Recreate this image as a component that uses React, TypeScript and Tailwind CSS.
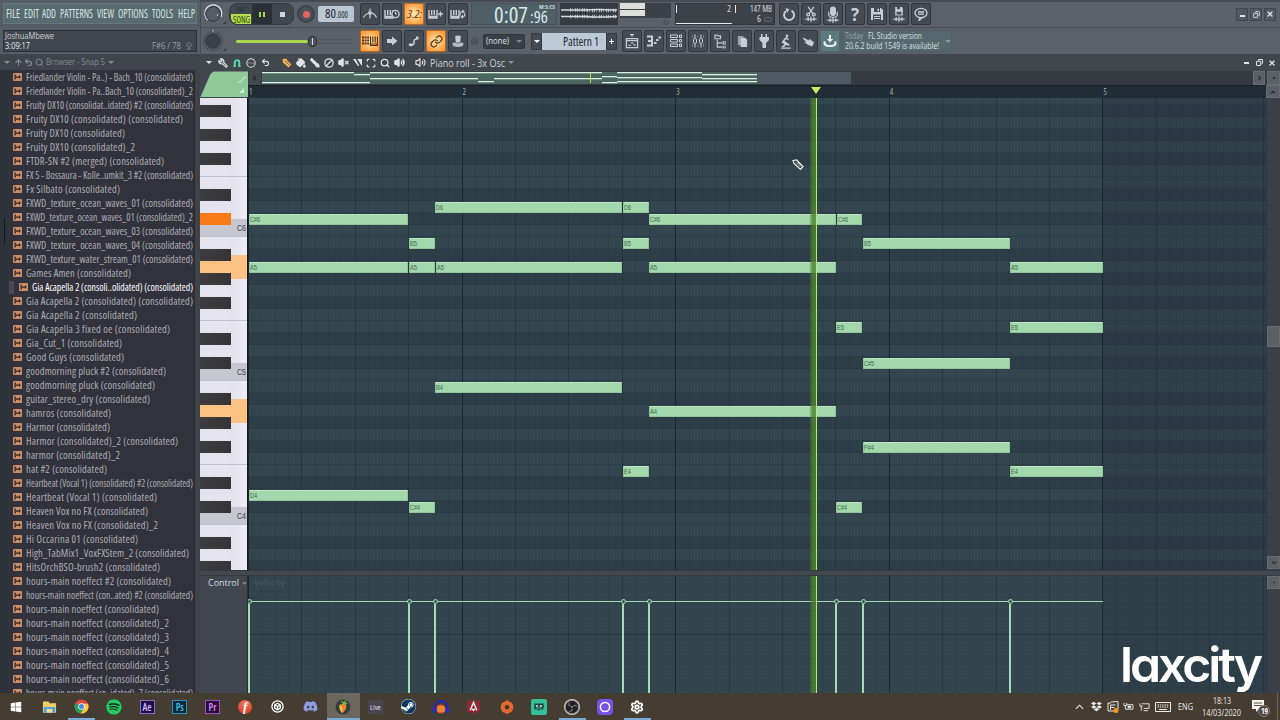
import { useLayoutEffect, useRef, type ReactNode } from "react";
import {
  ArrowUp, Undo2, Wrench, Magnet, CircleEllipsis, Brush, Ban, VolumeX, Volume2, Scan, Search,
  Link, Copy, X, PaintBucket, Settings, Lamp,
} from "lucide-react";
import { FaWindows, FaSpotify, FaSteam, FaDropbox, FaDiscord } from "react-icons/fa";
import { SiObsstudio } from "react-icons/si";

/** Single line of text set to an exact width, by horizontal scaling or by tracking. */
function Fit({ w, track = false, className = "", children }: { w: number; track?: boolean; className?: string; children: ReactNode }) {
  const ref = useRef<HTMLSpanElement>(null);
  useLayoutEffect(() => {
    const el = ref.current;
    if (!el) return;
    el.style.transform = "none";
    const natural = el.getBoundingClientRect().width;
    const length = (el.textContent ?? "").length;
    if (track && natural < w && length > 1) {
      el.style.letterSpacing = `${(w - natural) / (length - 1)}px`;
    } else {
      el.style.transform = `scaleX(${w / natural})`;
    }
  }, [w, track]);
  return (
    <span className="flex shrink-0" style={{ width: w }}>
      <span ref={ref} className={`shrink-0 origin-left whitespace-nowrap ${className}`}>{children}</span>
    </span>
  );
}

const files: [string, number][] = [
  ["Friedlander Violin - Pa..) - Bach_10 (consolidated)", 167],
  ["Friedlander Violin - Pa..Bach_10 (consolidated)_2", 167],
  ["Fruity DX10 (consolidat..idated) #2 (consolidated)", 167],
  ["Fruity DX10 (consolidated) (consolidated)", 157],
  ["Fruity DX10 (consolidated)", 99],
  ["Fruity DX10 (consolidated)_2", 109],
  ["FTDR-SN #2 (merged) (consolidated)", 138],
  ["FX 5 - Bossaura - Kolle..umkit_3 #2 (consolidated)", 167],
  ["Fx Silbato (consolidated)", 94],
  ["FXWD_texture_ocean_waves_01 (consolidated)", 167],
  ["FXWD_texture_ocean_waves_01 (consolidated)_2", 167],
  ["FXWD_texture_ocean_waves_03 (consolidated)", 167],
  ["FXWD_texture_ocean_waves_04 (consolidated)", 167],
  ["FXWD_texture_water_stream_01 (consolidated)", 167],
  ["Games Amen (consolidated)", 105],
  ["Gia Acapella 2 (consoli..olidated) (consolidated)", 161],
  ["Gia Acapella 2 (consolidated) (consolidated)", 167],
  ["Gia Acapella 2 (consolidated)", 111],
  ["Gia Acapella 3 fixed oe (consolidated)", 144],
  ["Gia_Cut_1 (consolidated)", 96],
  ["Good Guys (consolidated)", 98],
  ["goodmorning pluck #2 (consolidated)", 140],
  ["goodmorning pluck (consolidated)", 129],
  ["guitar_stereo_dry (consolidated)", 124],
  ["hamros (consolidated)", 85],
  ["Harmor (consolidated)", 84],
  ["Harmor (consolidated)_2 (consolidated)", 152],
  ["harmor (consolidated)_2", 94],
  ["hat #2 (consolidated)", 81],
  ["Heartbeat (Vocal 1) (consolidated) #2 (consolidated)", 167],
  ["Heartbeat (Vocal 1) (consolidated)", 131],
  ["Heaven Vox no FX (consolidated)", 122],
  ["Heaven Vox no FX (consolidated)_2", 132],
  ["Hi Occarina 01 (consolidated)", 112],
  ["High_TabMix1_VoxFXStem_2 (consolidated)", 163],
  ["HitsOrchBSO-brush2 (consolidated)", 134],
  ["hours-main noeffect #2 (consolidated)", 145],
  ["hours-main noeffect (con..ated) #2 (consolidated)", 167],
  ["hours-main noeffect (consolidated)", 133],
  ["hours-main noeffect (consolidated)_2", 143],
  ["hours-main noeffect (consolidated)_3", 143],
  ["hours-main noeffect (consolidated)_4", 143],
  ["hours-main noeffect (consolidated)_5", 143],
  ["hours-main noeffect (consolidated)_6", 143],
  ["hours-main noeffect (co..idated)_7 (consolidated)", 167],
];

const menu: [string, number, number][] = [
  ["FILE", 14, 3.5], ["EDIT", 15, 3], ["ADD", 14, 4.3], ["PATTERNS", 33, 4], ["VIEW", 17, 4.5], ["OPTIONS", 30, 4], ["TOOLS", 21, 4.5], ["HELP", 17, 0],
];

function Down({ className = "" }: { className?: string }) {
  return (
    <svg viewBox="0 0 8 4" className={`h-[3px] w-[6px] fill-current ${className}`}><path d="M0 0h8L4 4z" /></svg>
  );
}

function Browser() {
  return (
    <aside className="flex h-[693px] w-[200px] shrink-0 flex-col bg-[#32343c]">
      <div className="flex h-[54px] flex-col bg-[#565d64] pl-[3px] pt-[3px]">
        <div className="flex h-[21px] w-[194px] items-center border border-[#66787b] bg-[#586b6f] pl-[2px] text-[12px] font-medium leading-[14px] text-[#d5e3e2]">
          {menu.map(([t, w, g]) => (
            <span key={t} style={{ marginRight: g }}><Fit w={w}>{t}</Fit></span>
          ))}
        </div>
        <div className="mt-[6px] flex h-[22px] w-[194px] flex-col justify-between border border-[#2b3036] bg-[#40464d] px-[1px] text-[9px] leading-[10px] text-[#c9ced3] [font-stretch:normal]">
          <Fit w={49}>JoshuaMbewe</Fit>
          <div className="flex justify-between">
            <Fit w={25} className="font-medium text-[#e6eaee]">3:09:17</Fit>
            <div className="flex items-center gap-[4px] pr-[2px] text-[#9aa0a6]">
              <Fit w={29}>F#6 / 78</Fit>
              <Lamp size={8} strokeWidth={3} className="text-[#6d747b]" />
            </div>
          </div>
        </div>
      </div>
      <div className="flex h-[16px] items-center bg-[#40454c] pl-[4px] text-[#858b91]">
        <Down className="mr-[4px]" />
        <ArrowUp size={9} strokeWidth={3} className="mr-[1px]" />
        <Undo2 size={9} strokeWidth={3} className="mr-[2px]" />
        <Search size={9} strokeWidth={2.5} className="mr-[2px]" />
        <Fit w={59} className="text-[9px] leading-[12px] [font-stretch:normal]">Browser - Snap 5</Fit>
        <Down className="ml-[3px] h-[2px] w-[5px]" />
      </div>
      <div className="flex min-h-0 flex-1 overflow-hidden">
        <div className="flex w-[8px] shrink-0 flex-col bg-[#2c3239]">
          <div className="ml-[4px] mt-[148px] h-[26px] w-[1px] bg-[#14181d]" />
        </div>
        <ul className="w-[186px] shrink-0 overflow-hidden bg-[#32323c]">
          {files.map(([name, w], i) => (
            <li key={name} className={i === 15 ? "flex h-[14px] items-center" : "flex h-[14px] items-center pl-[5px]"}>
              {i === 15 && <span className="mr-[5px] ml-[1px] h-[13px] w-[5px] bg-[#4a4a52]" />}
              <svg viewBox="0 0 9 8" className="mr-[4px] h-[8px] w-[9px] shrink-0">
                <rect width="9" height="8" rx=".8" fill="#c98e69" />
                <path d="M1.500 1.500h1.300v5H1.500zM3 3.500h3V2l1.800 2L6 6V4.700H3z" fill="#33251f" />
              </svg>
              <Fit w={w} track className={i === 15 ? "text-[10.5px] font-medium leading-[14px] text-white" : "text-[10.5px] leading-[14px] text-[#acaeb3]"}>{name}</Fit>
            </li>
          ))}
        </ul>
        <div className="w-[6px] border-l border-[#272a31] bg-[#3f434a]" />
      </div>
    </aside>
  );
}

function Btn({ on = false, teal = false, children }: { on?: boolean; teal?: boolean; children?: ReactNode }) {
  const tone = on
    ? "border-[#c2651e] bg-[radial-gradient(circle,#ffe2a8_10%,#fd9f3f_80%)] text-[#553311]"
    : teal
      ? "border-[#50666b] bg-[#5c7a7d] text-[#e6f2f2]"
      : "border-[#31363c] bg-[#454b53] text-[#c9ced4]";
  return (
    <div className={`mr-[2px] flex h-[22px] w-[20px] shrink-0 items-center justify-center overflow-hidden rounded-[2px] border-[1.5px] ${tone}`}>{children}</div>
  );
}

function Keys({ plus, clock, loop }: { plus?: boolean; clock?: boolean; loop?: boolean }) {
  return (
    <svg viewBox="0 0 16 12" className="h-[12px] w-[16px] shrink-0" fill="none" stroke="currentColor" strokeWidth="1.4">
      <path d="M1 2v8h8V2M3.700 2v5M6.300 2v5" /><path d="M1 8.700h8" strokeWidth="2" />
      {plus && <path d="M10 6h5M12.500 3.500v5" />}
      {clock && <><circle cx="11.500" cy="6" r="3.600" fill="#454b53" /><path d="M11.500 4v2h1.600" strokeWidth="1" /></>}
      {loop && <path d="M10.300 7.600c-.9-3 .8-4.500 3-3.900M14.600 4.800c.9 3-.8 4.500-3 3.900M12.300 2l1.700 1.700-1.700 1.500M12.800 10.300l-1.500-1.600 1.500-1.500" strokeWidth="1.100" />}
    </svg>
  );
}

function Restart({ className = "" }: { className?: string }) {
  return (
    <svg viewBox="0 0 14 14" className={className} fill="none" stroke="currentColor" strokeWidth="1.900">
      <path d="M9.500 3.600A5 5 0 1 1 4 4" /><path d="M3.500 1l3.800 1.300L5 6z" fill="currentColor" stroke="none" />
    </svg>
  );
}

function Knob({ lit = false }: { lit?: boolean }) {
  return (
    <svg viewBox="0 0 28 26" className="h-[26px] w-[28px] shrink-0">
      {lit
        ? <path d="M7 19A8.500 8.500 0 1 1 20 16" fill="none" stroke="#e7ebef" strokeWidth="1.200" />
        : <circle cx="12" cy="13" r="9.500" fill="none" stroke="#32373d" strokeWidth="1.200" strokeDasharray="1 1.500" />}
      <circle cx="12" cy="13" r="7.300" fill={lit ? "#555c63" : "#3b4046"} stroke="#333940" />
      <circle cx={lit ? 16.5 : 12} cy={lit ? 14 : 3} r=".8" fill="#cfd4d9" />
      <path d="M22 23h3v-3z" fill="#363c42" />
    </svg>
  );
}

const windowBtn = "flex h-[13px] w-[12px] items-center justify-center border border-[#41474d] bg-[#515860] text-[#dfe3e7]";

function TopBar() {
  return (
    <header className="h-[54px] border-t-2 border-[#464c52] bg-[#5b6168]">
      <div className="flex h-[26px] items-center border-b border-l border-[#484e55] pb-[1px]">
        <Knob lit />
        <div className="flex h-[22px] w-[65px] overflow-hidden rounded-[8px] border border-[#343a40] bg-[#41474e]">
          <div className="flex w-[22px] flex-col items-center pt-[1px] text-[6.5px] leading-[9px]">
            <span className="text-[#252a30]">PAT</span>
            <span className="flex h-[10px] w-[20px] items-center justify-center rounded-bl-[6px] bg-[#b1df4e] text-[#2f4212]"><Fit w={17} className="text-[8px] font-medium leading-[9px]">SONG</Fit></span>
          </div>
          <div className="flex w-[20px] items-center justify-center gap-[2px] bg-[#2b3036]">
            <span className="h-[5px] w-[2px] bg-[#a9d850]" /><span className="h-[5px] w-[2px] bg-[#a9d850]" />
          </div>
          <div className="flex w-[21px] items-center justify-center"><span className="h-[5px] w-[5px] bg-[#d0d5da]" /></div>
        </div>
        <div className="ml-[3px] flex h-[18px] w-[18px] items-center justify-center rounded-full border-2 border-[#3d434a] bg-[#4b5158]"><span className="h-[7px] w-[7px] rounded-full bg-[#eb615d]" /></div>
        <div className="ml-[3px] flex h-[16px] w-[36px] items-baseline rounded-[2px] bg-[#bac6d2] pl-[7px] text-[#23292f]">
          <Fit w={11} className="text-[12px] leading-[16px]">80</Fit><Fit w={12} className="text-[9px] leading-[12px]">.000</Fit>
          <span className="ml-[2px] text-[6px] leading-[8px] text-[#7a8590]">:</span>
        </div>
        <div className="ml-[6px] flex">
          <Btn><svg viewBox="0 0 16 12" className="h-[12px] w-[16px] shrink-0" fill="none" stroke="currentColor"><path d="M1.500 9.500C3 6.500 5 5.300 8 5s5 1.500 6.500 4.500M8 .5v10" strokeWidth="1.200" /><path d="M6 3.500h4L9 7H7z" fill="currentColor" stroke="none" /></svg></Btn>
          <Btn><Keys clock /></Btn>
          <Btn on><Fit w={15} className="text-[11px] italic leading-[12px]">3.2:</Fit></Btn>
          <Btn><Keys plus /></Btn>
          <Btn><Keys loop /></Btn>
        </div>
        <div className="relative ml-[1px] flex h-[22px] w-[86px] items-baseline rounded-[1px] border border-[#44545a] bg-[#4e5f65] pl-[22px] text-[#d6e8e7]">
          <Fit w={34} className="text-[22px] leading-[20px]">0:07</Fit>
          <span className="ml-[2px]"><Fit w={18} className="text-[16.5px] leading-[12px]">:96</Fit></span>
          <span className="absolute right-[1px] top-0"><Fit w={16} className="text-[6px] font-semibold leading-[6px]">M:S:CS</Fit></span>
        </div>
        <svg viewBox="0 0 58 22" className="ml-[3px] h-[22px] w-[58px] bg-[#363b42]" fill="none" stroke="#d5dade">
          <path d="M1 7h25q8-1 31 0" strokeWidth="1.300" />
          <path d="M1 13.500h25q8 1 31 0" strokeWidth="1.300" />
          <path d="M10 7h17M27 7.500h30M10 13.500h17M27 13.500h30" strokeWidth="3.500" strokeDasharray="1 1.300 .6 2 1.300 .8" opacity=".75" />
        </svg>
        <div className="ml-[2px] flex h-[22px] w-[51px] flex-col text-[#3b4147]">
          <div className="flex h-[15px] flex-col gap-[1px] bg-[#3c4148]"><span className="h-[6px] w-[25px] bg-[#dedfdc]" /><span className="h-[6px] w-[25px] bg-[#dedfdc]" /></div>
          <Restart className="ml-auto mr-[2px] mt-[1px] h-[6px] w-[6px]" />
        </div>
        <div className="ml-[4px] flex h-[22px] w-[100px] justify-end gap-[4px] border border-[#30363c] bg-[#3d4249] pr-[1px] text-[9px] font-medium leading-[10px] text-[#d3d8dc]">
          <div className="mr-auto flex w-[55px] flex-col"><div className="flex justify-between"><span className="mt-[1px] h-[8px] w-[1px] bg-[#dfe3e6]" /><Fit w={4}>2</Fit></div><span className="mt-auto h-px w-[56px] bg-[#e8ecef]" /></div>
          <span className="mt-[1px] h-[8px] w-[1px] bg-[#dfe3e6]" />
          <div className="flex w-[36px] flex-col items-end"><div className="pr-[1px]"><Fit w={22}>147 MB</Fit></div><div className="flex items-center gap-[3px] pr-[1px]"><Fit w={4}>6</Fit><span className="h-[5px] w-[8px] rounded-full border border-[#646b72]" /></div></div>
        </div>
        <div className="ml-[4px] flex">
          <Btn><Restart className="h-[14px] w-[14px]" /></Btn>
          <Btn><svg viewBox="0 0 14 18" className="h-[17px] w-[14px]" fill="none" stroke="currentColor" strokeWidth="1.300"><path d="M4 1l5 7M10 1L5 8M1 14h12M4 12v4M7 11v6M10 12v4" /><circle cx="4" cy="9" r="1.500" /><circle cx="10" cy="9" r="1.500" /></svg></Btn>
          <Btn><svg viewBox="0 0 14 18" className="h-[17px] w-[14px]" fill="none" stroke="currentColor" strokeWidth="1.200"><rect x="4.500" y="1" width="5" height="9" rx="2.500" fill="currentColor" /><path d="M2.500 6v4q1 2 4.500 2t4.500-2V6M1 15h12M4 13v4M7 12v6M10 13v4" /></svg></Btn>
          <Btn><span className="text-[17px] font-bold leading-none [font-stretch:normal]">?</span></Btn>
          <Btn><svg viewBox="0 0 12 12" className="h-[12px] w-[12px]"><path d="M0 0h10l2 2v10H0z" fill="currentColor" /><path d="M3 0h6v4H3zM2 6.500h8V12H2z" fill="#454b53" /><path d="M6.500.8h1.500v2.500H6.500zM3 8h6v1H3zM3 10h6v1H3z" fill="currentColor" /></svg></Btn>
          <Btn><svg viewBox="0 0 14 18" className="h-[17px] w-[14px]"><path d="M3 1h7l1 1v8H3z" fill="currentColor" /><path d="M5 1h3v2.500H5zM4.500 6h5v3h-5z" fill="#454b53" /><path d="M1 14h12M4 12v4M7 11v6M10 12v4" stroke="currentColor" strokeWidth="1.300" /></svg></Btn>
          <Btn><svg viewBox="0 0 14 14" className="h-[14px] w-[14px]" fill="none" stroke="currentColor" strokeWidth="1.300"><ellipse cx="7" cy="6" rx="6" ry="4.700" /><path d="M6 10l-1 3.500L9 10M4 5h6M4 7.200h6" /></svg></Btn>
        </div>
        <div className="ml-auto mr-[4px] flex gap-[2px]">
          <span className={windowBtn}><span className="mt-[4px] h-[2px] w-[5px] bg-current" /></span>
          <span className={windowBtn}><Copy size={7} strokeWidth={3} className="-scale-x-100" /></span>
          <span className={windowBtn}><X size={8} strokeWidth={4} /></span>
        </div>
      </div>
      <div className="flex h-[26px] items-center border-l border-[#484e55]">
        <Knob />
        <div className="ml-[7px] flex h-[20px] w-[116px] items-center">
          <span className="h-[3px] w-[72px] rounded bg-[#a9d64b]" />
          <span className="flex h-[11px] w-[9px] justify-center rounded-full border border-[#25292d] bg-[#4e555c] pt-[1px]"><span className="h-[7px] w-[1px] bg-[#d7dbdf]" /></span>
          <span className="h-[5px] w-[35px] border-y border-[#4f565d]" />
        </div>
        <div className="ml-[8px] flex">
          <Btn on><svg viewBox="0 0 16 12" className="h-[12px] w-[16px] shrink-0" fill="none" stroke="currentColor" strokeWidth="1.200"><path d="M0 2.500h7M0 5.500h7M0 8.500h7" strokeDasharray="2 .6" strokeWidth="2" /><path d="M8.500 1.500v9h7v-9M10.800 1.500v6M13.200 1.500v6M8.500 9h7" /></svg></Btn>
          <Btn><svg viewBox="0 0 12 12" className="h-[12px] w-[12px] fill-current"><path d="M1 4h5V1.500L11.500 6 6 10.500V8H1z" /></svg></Btn>
          <Btn><svg viewBox="0 0 12 12" className="h-[12px] w-[12px]"><path d="M3 10q3.500 0 3-3T9 4" fill="none" stroke="currentColor" strokeWidth="1.500" /><ellipse cx="2.800" cy="9.700" rx="2.200" ry="1.500" fill="currentColor" /><path d="M8 1.500h2.500V4.500H8z" fill="currentColor" /></svg></Btn>
          <Btn on><Link size={13} strokeWidth={2.200} /></Btn>
          <Btn><svg viewBox="0 0 14 14" className="h-[13px] w-[14px] fill-current"><path d="M4 1q3-1 6 0l-.6 7H4.600z" /><path d="M1 9.500q0-1.500 2.500-1.500 3.500 2 7 0Q13 8 13 9.500 13 13 7 13T1 9.500z" opacity=".85" /></svg></Btn>
        </div>
        <Magnet size={9} className="-rotate-45 text-[#41474d]" />
        <div className="ml-[4px] flex h-[15px] w-[42px] items-center justify-between rounded-[2px] border border-[#31353a] bg-[#3a3f46] px-[2px] text-[#dde1e5]"><Fit w={23} className="text-[9px] leading-[12px] [font-stretch:normal]">(none)</Fit><Down className="w-[5px] text-[#7d848b]" /></div>
        <div className="ml-[6px] flex h-[17px] items-center">
          <span className="flex h-[17px] w-[11px] items-center justify-center border border-[#353b41] bg-[#444a51] text-white"><Down className="w-[5px]" /></span>
          <span className="flex h-[17px] w-[64px] items-center bg-[#bcc9d6] pl-[21px] text-[#23292f]"><Fit w={36} className="text-[12px] leading-[15px]">Pattern 1</Fit><span className="ml-[2px] text-[7px] leading-[8px] text-[#7a8590]">:</span></span>
          <span className="flex h-[17px] w-[11px] items-center justify-center border border-[#353b41] bg-[#444a51] text-white"><svg viewBox="0 0 6 6" className="h-[5px] w-[5px]"><path d="M0 3h6M3 0v6" stroke="currentColor" strokeWidth="1.200" /></svg></span>
        </div>
        <div className="ml-[5px] flex">
          <Btn><svg viewBox="0 0 14 16" className="h-[15px] w-[14px]" fill="none" stroke="currentColor" strokeWidth="1.300"><path d="M4.500 0h5L7 3z" fill="currentColor" stroke="none" /><path d="M1 5h12v9.500H1zM1 7h12M3 12h3M6 9.800h2.500M8.500 11.500H11" /></svg></Btn>
          <Btn><svg viewBox="0 0 14 12" className="h-[12px] w-[14px]" fill="none" stroke="currentColor" strokeWidth="2"><path d="M0 1.500h5M1 6h4M0 10.500h5M5 .5v11M7 8h2.500M9 5h2.500M11.500 2.500H14" /></svg></Btn>
          <Btn><svg viewBox="0 0 12 14" className="h-[14px] w-[12px]" fill="none" stroke="currentColor" strokeWidth="1"><path d="M.5 1h7v2.500h-7zM.5 5.500h7V8h-7zM.5 10h7v2.500h-7zM9.500 1h2v2.500h-2zM9.500 5.500h2V8h-2zM9.500 10h2v2.500h-2z" /></svg></Btn>
          <Btn><svg viewBox="0 0 12 14" className="h-[14px] w-[12px]" fill="none" stroke="currentColor" strokeWidth="1"><path d="M3 .5v4M3 9.500v4M9 .5v4M9 9.500v4" /><path d="M.5 1v3M.5 10v3M11.500 1v3M11.500 10v3M6 1v3M6 10v3" opacity=".35" /><rect x="1.500" y="4.500" width="3" height="5" rx="1.300" /><rect x="7.500" y="4.500" width="3" height="5" rx="1.300" /></svg></Btn>
          <Btn><svg viewBox="0 0 14 16" className="h-[15px] w-[13px]" fill="none" stroke="currentColor" strokeWidth="1.200"><path d="M1 1h2l1 1h3v3H1zM3.500 6v8H9M3.500 9.500H9M10 7.500v4M12 7.500v4M10 12.500v3M12 12.500v3" /></svg></Btn>
          <Btn><svg viewBox="0 0 12 14" className="h-[13px] w-[11px]"><path d="M1 1h6v10H1z" fill="#9ca2a9" /><path d="M4 3h5l2 2v8H4z" fill="currentColor" /></svg></Btn>
          <Btn><svg viewBox="0 0 12 14" className="h-[14px] w-[12px] fill-current"><path d="M3 0h1.500v3h3V0H9v3h2v3L8 9v5H4.500V9L1.500 6V3H3z" /></svg></Btn>
          <Btn><svg viewBox="0 0 14 16" className="h-[15px] w-[14px]" fill="none" stroke="currentColor" strokeWidth="1.800"><circle cx="8" cy="2" r="1.400" fill="currentColor" stroke="none" /><path d="M7 4L3.500 8.500 7 11l-4 3M4.500 8l6 4M9.500 6L7 4" /><path d="M2 15h10" strokeWidth="1.200" /></svg></Btn>
          <Btn><svg viewBox="0 0 14 12" className="h-[11px] w-[13px] fill-current"><path d="M1 1.500L7.500 5 8 3l5 4-2 4.500-5-2-1-1.300L2 7.500l2.500-1L1 3z" /></svg></Btn>
          <Btn teal><svg viewBox="0 0 14 14" className="h-[14px] w-[14px]"><path d="M6 1h2v4h2.200L7 8.500 3.800 5H6z" fill="currentColor" /><path d="M2 7.500Q0 12 7 12t5-4.500" fill="none" stroke="currentColor" strokeWidth="2.200" /></svg></Btn>
        </div>
        <div className="flex h-[22px] w-[110px] items-center border border-[#4d6165] bg-[#56686d] pl-[2px] text-[9px] leading-[10px] [font-stretch:normal]">
          <div>
            <div className="flex gap-[5px]"><Fit w={18} className="text-[#95a5a9]">Today</Fit><Fit w={54} className="text-[#d4e3e3]">FL Studio version</Fit></div>
            <Fit w={94} className="text-[#d4e3e3]">20.6.2 build 1549 is available!</Fit>
          </div>
          <Down className="ml-[6px] w-[5px] text-[#87979b]" />
        </div>
      </div>
    </header>
  );
}

function Slot({ w = 14, className = "", children }: { w?: number; className?: string; children: ReactNode }) {
  return <span className={`flex shrink-0 items-center justify-center ${className}`} style={{ width: w }}>{children}</span>;
}

function RollTitle() {
  return (
    <div className="flex h-[17px] items-center bg-[#42474e] pl-[2px] text-[#dfe3e6]">
      <Slot><Down /></Slot>
      <Slot><Wrench size={10} strokeWidth={3} className="-scale-x-100" /></Slot>
      <Slot className="text-[#57dba8]"><svg viewBox="0 0 10 10" className="h-[9px] w-[10px]" fill="none" stroke="currentColor" strokeWidth="2.200"><path d="M2.500 9.500V5a2.500 2.500 0 0 1 5 0v4.500" /><path d="M.8 9h3M6.200 9h3" strokeWidth="1.500" /></svg></Slot>
      <Slot><CircleEllipsis size={10} strokeWidth={2.500} /></Slot>
      <Slot w={28} className="pr-[13px]"><Undo2 size={9} strokeWidth={3} /></Slot>
      <Slot className="-ml-[6px] text-[#f5b04f]"><svg viewBox="0 0 10 10" className="h-[10px] w-[10px]"><path d="M.5 1L4 .5 9.500 6l-3 3.500L1 4.500z" fill="currentColor" /><path d="M3 3l4 4M5 2l3.500 4" stroke="#42474e" strokeWidth=".7" /></svg></Slot>
      <Slot><PaintBucket size={10} strokeWidth={3} className="fill-current" /></Slot>
      <Slot><Brush size={10} strokeWidth={3} className="-scale-x-100 fill-current" /></Slot>
      <Slot><Ban size={10} strokeWidth={3} className="-scale-x-100" /></Slot>
      <Slot><VolumeX size={11} strokeWidth={3} className="fill-current" /></Slot>
      <Slot><svg viewBox="0 0 10 10" className="h-[9px] w-[9px] fill-current"><path d="M0 1h3l4 8H5.500zM5 1h5v8L8 6z" /></svg></Slot>
      <Slot><Scan size={10} strokeWidth={3} /></Slot>
      <Slot><Search size={10} strokeWidth={3} /></Slot>
      <Slot><Volume2 size={11} strokeWidth={3} className="fill-current" /></Slot>
      <Slot w={28} className="-mr-[4px]"><Volume2 size={11} strokeWidth={2.500} /></Slot>
      <Fit w={75} className="text-[10px] leading-[14px] text-[#cdd2d6] [font-stretch:normal]">Piano roll - 3x Osc</Fit>
      <Down className="ml-[3px] h-[2px] w-[5px] text-[#8a9096]" />
      <span className="ml-auto h-[2px] w-[5px] bg-current" />
      <Copy size={7} strokeWidth={3.500} className="ml-[7px] -scale-x-100" />
      <X size={8} strokeWidth={4} className="ml-[5px] mr-[4px]" />
    </div>
  );
}

// x start, width, y — all relative to the overview strip
const overview: [number, number, number][] = [
  [0, 92, 0], [0, 92, 10], [92, 16, 2], [92, 16, 10], [108, 108, 0], [108, 108, 6], [216, 16, 0], [216, 16, 9],
  [232, 108, 0], [232, 108, 6], [340, 15, 4], [340, 15, 10], [355, 85, 0], [355, 85, 5], [355, 85, 9], [440, 55, 2], [440, 55, 6], [440, 55, 9],
];

const white = [18, 24, 24, 18, 18, 24, 18];
const blackRows = new Set([1, 3, 5, 8, 10]);

function Piano() {
  return (
    <div className="flex h-[472px] w-[48px] shrink-0 overflow-hidden border-r border-[#15191d] bg-[#e4e3ee]">
      <div className="-mt-[5px] w-[31px]">
        {Array.from({ length: 40 }, (_, i) => {
          const n = i % 12;
          let c = "bg-[#e4e3ee]";
          if (blackRows.has(n)) c = "bg-[linear-gradient(90deg,#3d3d40,#343437)]";
          if (i === 10) c = "bg-[#fb7a18]";
          if (i === 14 || i === 26) c = "bg-[#fbc284]";
          if (n === 11) c = "bg-[#c6c7cf]";
          const edge = n === 11 || n === 6 ? "border-b border-[#c2c2cc]" : "";
          return <div key={i} className={`h-[12px] ${c} ${edge}`} />;
        })}
      </div>
      <div className="-mt-[5px] w-[16px] shrink-0">
        {Array.from({ length: 24 }, (_, i) => {
          const n = i % 7;
          const c = i === 8 || i === 15 ? "bg-[#fbc284]" : n === 6 ? "bg-[#c6c7cf]" : "bg-[linear-gradient(90deg,#e2e1ec,#eeedf6)]";
          const edge = n === 6 || n === 3 ? "border-b border-[#c2c2cc]" : "";
          return (
            <div key={i} className={`flex items-center justify-end pr-px text-[9px] leading-[10px] text-[#3c3d44] ${c} ${edge}`} style={{ height: white[n] }}>
              {n === 6 && <Fit w={9} className="font-['Liberation_Sans']">{`C${6 - Math.floor(i / 7)}`}</Fit>}
            </div>
          );
        })}
      </div>
    </div>
  );
}

const STEP = 13.35;

function Columns() {
  return (
    <>
      {Array.from({ length: 77 }, (_, k) => {
        const c = k % 16 === 0 ? "bg-[#17242c]/90" : k % 4 === 0 ? "bg-[#1f2d36]/60" : "bg-[#1f2d36]/20";
        return <i key={k} className={`absolute inset-y-0 w-px ${c}`} style={{ left: Math.round(k * STEP) }} />;
      })}
      <i className="absolute inset-y-0 left-[855px] right-0 bg-[#1c2a38]/20" />
    </>
  );
}

const Playhead = () => (
  <i className="absolute inset-y-0 left-[561px] w-[8px] border-r border-[#b5ec77] bg-[linear-gradient(90deg,transparent,#4d8030cc_50%,#4d8a2acc)]" />
);

// label, start, end, row index counted from the top row
const notes: [string, number, number, number][] = [
  ["C#6", 1, 160, 10], ["A5", 1, 160, 14], ["D4", 1, 160, 33],
  ["B5", 161, 187, 12], ["A5", 161, 187, 14], ["C#4", 161, 187, 34],
  ["D6", 187, 374, 9], ["A5", 188, 374, 14], ["B4", 187, 374, 24],
  ["D6", 375, 401, 9], ["B5", 375, 401, 12], ["E4", 375, 401, 31],
  ["C#6", 401, 588, 10], ["A5", 401, 588, 14], ["A4", 401, 588, 26],
  ["C#6", 589, 614, 10], ["E5", 588, 614, 19], ["C#4", 588, 614, 34],
  ["B5", 615, 762, 12], ["C#5", 615, 762, 22], ["F#4", 615, 762, 29],
  ["A5", 762, 855, 14], ["E5", 762, 855, 19], ["E4", 762, 855, 31],
];

function Grid() {
  return (
    <div className="relative h-[472px] min-w-0 flex-1 overflow-hidden bg-[#33454f]">
      <div className="-mt-[5px]">
        {Array.from({ length: 40 }, (_, i) => (
          <div key={i} className={blackRows.has(i % 12) ? "h-[12px] border-b border-[#2a3943] bg-[#2e3e49]" : "h-[12px] border-b border-[#2e3e48] bg-[#33454f]"} />
        ))}
      </div>
      <Columns />
      {notes.map(([t, a, b, r], i) => (
        <div key={i} className="absolute flex h-[11px] items-center rounded-[1px] border border-[#8fc79b] border-t-[#b9e6bf] bg-[#a3d7ac]" style={{ left: a, width: b - a, top: r * 12 - 4 }}>
          <Fit w={t.length > 2 ? 10 : 7} className="font-['Liberation_Sans'] text-[7.5px] leading-[9px] text-[#42684c]">{t}</Fit>
        </div>
      ))}
      <Playhead />
      <svg viewBox="0 0 12 12" className="absolute left-[544px] top-[61px] h-[12px] w-[12px]">
        <path d="M1 1.500l3.500-.5L11 7.500 8.500 10.500 2 4.500z" fill="#2c3a43" stroke="#f2f4f5" strokeWidth="1.200" />
        <path d="M4 3.500l4.500 4.500M5.500 3l3.800 3.800" stroke="#f2f4f5" strokeWidth=".7" />
      </svg>
    </div>
  );
}

const stems = [1, 161, 187, 375, 401, 588, 615, 762];

function Velocity() {
  return (
    <div className="relative h-[117px] min-w-0 flex-1 overflow-hidden bg-[#33454f] bg-[repeating-linear-gradient(0deg,transparent_0_5px,#2b3b4566_5px_6px)]">
      <Columns />
      <i className="absolute inset-x-0 top-[58px] h-px bg-[#1e2c35]/60" />
      <div className="absolute left-[6px] top-[1px]"><Fit w={31} className="text-[9px] leading-[12px] text-[#465660]">Velocity</Fit></div>
      <i className="absolute left-0 top-[25px] h-px w-[855px] bg-[#a6d8b2]" />
      {stems.map((x) => (
        <span key={x} className="absolute bottom-0 top-[23px] flex w-[4px] flex-col items-center" style={{ left: x - 2 }}>
          <i className="h-[5px] w-[5px] shrink-0 rounded-full border border-[#a6d8b2] bg-[#3b5a52]" />
          <i className="w-[2px] flex-1 bg-[#a6dab2]" />
        </span>
      ))}
      <Playhead />
    </div>
  );
}

const scrollBtn = "flex shrink-0 items-center justify-center border border-[#666c72] bg-[#5a6066] text-[#2c3136]";

function Chevron({ d }: { d: string }) {
  return <svg viewBox="0 0 8 8" className="h-[6px] w-[6px]" fill="none" stroke="currentColor" strokeWidth="1.500"><path d={d} /></svg>;
}

function PianoRoll() {
  return (
    <main className="flex h-[639px] flex-col bg-[#42474e]">
      <RollTitle />
      <div className="flex h-[27px]">
        <svg viewBox="0 0 48 27" className="h-[27px] w-[48px] shrink-0">
          <path d="M0 27L10 4q2-3.500 5-3.500h33V26H0z" fill="#8fc99a" />
          <path d="M38 11h3l2-4 3-1" fill="none" stroke="#d0ecd3" strokeWidth="1" />
          <path d="M39 22h5v-5z" fill="#d0ecd3" />
        </svg>
        <div className="flex min-w-0 flex-1 flex-col">
          <div className="flex h-[14px] bg-[#363b42]">
            <span className="ml-[1px] mr-[1px] flex w-[12px] items-center justify-center bg-[#42484f] text-[#23282d]"><Chevron d="M5 1L2 4l3 3" /></span>
            <div className="relative mt-px h-[12px] w-[589px] bg-[#4d5a62]">
              <i className="absolute left-0 h-full w-[495px] bg-[#4b6561]" />
              {overview.map(([x, w, y], i) => <i key={i} className="absolute h-px bg-[#d9efdf] shadow-[0_1px_#9fbcae80]" style={{ left: x, width: w, top: y }} />)}
              <i className="absolute left-[328px] top-[1px] h-[10px] w-px bg-[#b5e83e]" />
            </div>
            <span className={`${scrollBtn} ml-auto w-[12px]`}><Chevron d="M3 1l3 3-3 3" /></span>
            <span className={`${scrollBtn} ml-[2px] w-[13px]`}><i className="h-[2px] w-[2px] bg-current" /></span>
          </div>
          <div className="flex h-[13px]">
            <div className="relative flex min-w-0 flex-1 overflow-hidden border-t border-[#172129] bg-[#202d35] text-[8px] leading-[12px] text-[#a3adb4]">
              {[1, 2, 3, 4, 5].map((n) => <span key={n} className="w-[213.6px] shrink-0 pl-[1px]">{n}</span>)}
              <svg viewBox="0 0 10 7" className="absolute left-[563px] top-[1px] h-[7px] w-[10px]"><path d="M0 0h10L5 7z" fill="#c9f063" /></svg>
            </div>
            <span className={`${scrollBtn} w-[14px]`}><Chevron d="M1 6l3-3 3 3" /></span>
          </div>
        </div>
      </div>
      <div className="flex h-[472px]">
        <Piano />
        <Grid />
        <div className="flex w-[14px] flex-col border-l border-[#30363c] bg-[#3a4047]">
          <span className={`${scrollBtn} mt-[228px] h-[21px]`} />
          <span className={`${scrollBtn} mb-[1px] mt-auto h-[13px]`}><Chevron d="M1 2l3 3 3-3" /></span>
        </div>
      </div>
      <div className="h-[6px] border-y border-[#333a41] bg-[#43484e]" />
      <div className="flex h-[117px]">
        <div className="flex h-full w-[48px] shrink-0 items-start border-r border-[#262e35] bg-[#41474e] pl-[8px] text-[#d9dde0]">
          <Fit w={31} className="text-[9.500px] leading-[13px] [font-stretch:normal]">Control</Fit><Down className="ml-[3px] mt-[6px] w-[4px] text-[#8a9096]" />
        </div>
        <Velocity />
        <div className="w-[14px] border-l border-[#30363c] bg-[#3a4047]"><span className={`${scrollBtn} h-[13px]`}><i className="h-px w-[2px] bg-current" /></span></div>
      </div>
    </main>
  );
}

function Adobe({ t, tone }: { t: string; tone: string }) {
  return <span className={`flex h-[14px] w-[15px] items-center justify-center border text-[10px] font-semibold leading-none ${tone}`}>{t}</span>;
}

function Taskbar() {
  const apps: ReactNode[] = [
    <FaWindows size={12} color="#fff" />,
    <svg viewBox="0 0 16 14" className="h-[14px] w-[15px]"><path d="M1 1h6l1 2h7v10H1z" fill="#f6cf63" /><path d="M2 7h12v6H2z" fill="#4aa0dc" /><path d="M5 9h6v4H5z" fill="#f6dc8c" /></svg>,
    <svg viewBox="0 0 16 16" className="h-[15px] w-[15px]"><circle cx="8" cy="8" r="7.500" fill="#dd4b3e" /><path d="M8 8L1.500 4.300A7.500 7.500 0 0 0 7 15.400L11.200 9.800z" fill="#23a05a" /><path d="M8 8l3.200 1.800L7 15.400A7.500 7.500 0 0 0 14.900 5H8z" fill="#fcca3f" /><circle cx="8" cy="8" r="3.500" fill="#fff" /><circle cx="8" cy="8" r="2.700" fill="#4687e8" /></svg>,
    <span className="rounded-full bg-[#1d2b20]"><FaSpotify size={16} color="#28c865" /></span>,
    <Adobe t="Ae" tone="bg-[#1f0e42] border-[#8670c8] text-[#cfb4ff]" />,
    <Adobe t="Ps" tone="bg-[#0c2838] border-[#2295bd] text-[#42c6ef]" />,
    <Adobe t="Pr" tone="bg-[#2b0e38] border-[#a04fc0] text-[#dd8dff]" />,
    <span className="flex h-[14px] w-[14px] items-center justify-center rounded-full bg-[radial-gradient(circle_at_50%_25%,#f47b62,#d12f1e)] font-['Liberation_Serif'] text-[13px] font-bold italic leading-none text-white">f</span>,
    <svg viewBox="0 0 14 14" className="h-[13px] w-[13px]" fill="none" stroke="#fff" strokeWidth="1.400"><circle cx="7" cy="7" r="6" /><path d="M7 3.500l3 1.700v3.600l-3 1.700-3-1.700V5.200zM4 5.200L7 7l3-1.800M7 7v3.500" /></svg>,
    <FaDiscord size={15} color="#8b9de0" />,
    <svg viewBox="0 0 16 16" className="h-[16px] w-[16px]"><circle cx="8" cy="8" r="7.500" fill="#343c3e" /><path d="M4.500 6q1-1.500 4-1 2.500 0 3 1.500-.5 5-4 7.500Q4.500 11 4.500 6z" fill="#f4802a" /><path d="M5.500 7l2 4M7 13.500Q4.500 10 5 6.500" stroke="#f8d24b" strokeWidth="1.200" fill="none" /><path d="M8 6L6 1.500 8.500 3 11 1l-.5 3L13 4 9.500 6.500z" fill="#76b83f" /></svg>,
    <span className="flex h-[14px] w-[15px] items-center justify-center bg-[#494550] text-[#dcdce2]"><Fit w={11} className="text-[7.5px] leading-[10px]">Live</Fit></span>,
    <span className="rounded-full bg-[#1c4c80]"><FaSteam size={15} color="#10375f" className="rounded-full bg-white" /></span>,
    <svg viewBox="0 0 16 16" className="h-[16px] w-[16px]"><circle cx="8" cy="10" r="4.500" fill="#e8502c" /><path d="M4.500 8h7M4 10h8M4.500 12h7" stroke="#f7b731" strokeWidth="1.200" /><path d="M2 10V8a6 6 0 0 1 12 0v2" fill="none" stroke="#2125c4" strokeWidth="2" /><rect x="0" y="8" width="3.500" height="6" rx="1.500" fill="#272bd0" /><rect x="12.500" y="8" width="3.500" height="6" rx="1.500" fill="#272bd0" /></svg>,
    <svg viewBox="0 0 14 14" className="h-[14px] w-[13px]"><path d="M0 0h14v12L7 14l-7-2z" fill="#8d2933" /><path d="M3.500 10.500L7 2l3.500 8.500M5.500 9L7 10.500 8.500 9" fill="none" stroke="#f0e8e6" strokeWidth="1.600" /></svg>,
    <svg viewBox="0 0 14 16" className="h-[16px] w-[14px]"><path d="M7 0q0 2 2 2.500A6 6 0 0 1 9 14q-2 .5-2 2 0-1.800-2-2A6 6 0 0 1 5 2.500Q7 2 7 0z" fill="#e4692d" /><circle cx="7" cy="8.200" r="2.200" fill="#413325" /></svg>,
    <svg viewBox="0 0 16 16" className="h-[16px] w-[16px]"><rect width="16" height="16" rx="2" fill="#37bd97" /><path d="M3.500 4.500h9q1 3-.5 6H8.500L7 12v-1.500H4q-1.500-3-.5-6z" fill="#17433a" /><path d="M5 6.500h2v1H5zM9 6.500h2v1H9zM5 9h6" fill="#fff" stroke="#9be5cf" strokeWidth=".6" /></svg>,
    <span className="rounded-full bg-[#222228] ring-1 ring-[#d0cdc8]"><SiObsstudio size={14} color="#b2b0b2" /></span>,
    <svg viewBox="0 0 16 16" className="h-[16px] w-[16px]"><rect width="16" height="16" rx="4" fill="#7552e8" /><circle cx="8" cy="8" r="4.600" fill="none" stroke="#fff" strokeWidth="1.500" /></svg>,
    <Settings size={14} strokeWidth={3} color="#fff" />,
  ];
  return (
    <footer className="flex h-[27px] bg-[#453d32]">
      {apps.map((a, i) => (
        <div key={i} className={`flex w-[32.700px] shrink-0 items-center justify-center ${i === 10 ? "bg-[#6a675f]" : ""}`}>
          <span className={`flex h-full items-center justify-center border-y-2 border-t-transparent ${i === 10 ? "w-full" : "w-[27px]"} ${[2, 10, 17, 19].includes(i) ? "border-b-[#77aad5]" : "border-b-transparent"}`}>{a}</span>
        </div>
      ))}
      <div className="ml-auto flex items-center text-[#eceae6]">
        <svg viewBox="0 0 10 6" className="mr-[7px] h-[6px] w-[9px]" fill="none" stroke="currentColor" strokeWidth="1.200"><path d="M1 5l4-4 4 4" /></svg>
        <FaDropbox size={11} className="mr-[5px]" />
        <svg viewBox="0 0 12 12" className="mr-[4px] h-[12px] w-[12px]" fill="none" stroke="currentColor"><path d="M1 2h3M1 2v8h6M4 1l7-.5V8M3.500 4h5M3.500 6.500h4M3.500 4v5" /><circle cx="9" cy="9.500" r="2.500" fill="#f29a27" stroke="none" /></svg>
        <svg viewBox="0 0 12 10" className="mr-[5px] h-[9px] w-[11px]" fill="none" stroke="currentColor"><path d="M4 3h7v5H4M1 1v3h3V1M2.500 4v4h2" /><path d="M5.500 4.500h3v2h-3z" fill="currentColor" /></svg>
        <svg viewBox="0 0 12 10" className="mr-[5px] h-[10px] w-[11px]" fill="none" stroke="currentColor"><path d="M3 1.500h8v5H5M1 1v3h3M2.500 4v5M5 9h5" /></svg>
        <svg viewBox="0 0 16 10" className="mr-[7px] h-[10px] w-[16px]" fill="none" stroke="currentColor"><path d="M.5.5h15v9H.5z" /><path d="M2.500 3h11M2.500 5h11" strokeDasharray="1.500 .8" /><path d="M4 7.500h8" /></svg>
        <Fit w={15} className="text-[9px] leading-[12px] [font-stretch:normal]">ENG</Fit>
        <div className="ml-[9px] flex w-[39px] flex-col items-center text-[9px] leading-[12px] [font-stretch:normal]"><Fit w={18}>18:13</Fit><Fit w={39}>14/03/2020</Fit></div>
        <div className="relative ml-[11px] mr-[7px] h-[20px] w-[18px]">
          <svg viewBox="0 0 12 12" className="mt-[3px] h-[12px] w-[12px]"><path d="M0 0h12v9H7l-3 3V9H0z" fill="#f5f4f2" /><path d="M2 3h8M2 5.500h8" stroke="#453d32" strokeWidth=".9" /></svg>
          <span className="absolute bottom-0 right-0 flex h-[12px] w-[12px] items-center justify-center rounded-full border border-[#8a8378] bg-[#4c463e] text-white"><Fit w={7} className="text-[8px] font-bold leading-[10px]">19</Fit></span>
        </div>
        <span className="mr-[2px] h-full w-px bg-[#6b655c]" />
      </div>
    </footer>
  );
}

export default function App() {
  return (
    <div className="relative h-[720px] w-[1280px] overflow-hidden bg-[#42474e] font-['Open_Sans','Noto_Sans',sans-serif] [font-stretch:condensed]">
      <div className="flex h-[693px]">
        <Browser />
        <div className="flex w-[1080px] flex-col">
          <TopBar />
          <PianoRoll />
        </div>
      </div>
      <Taskbar />
      <div className="absolute left-[1120px] top-[636px] text-white">
        <Fit w={140} className="font-['Inter','Liberation_Sans',sans-serif] text-[48px] font-semibold leading-[58px] tracking-[-3px] [font-feature-settings:'cv11'] [font-stretch:normal]">laxcity</Fit>
      </div>
    </div>
  );
}
